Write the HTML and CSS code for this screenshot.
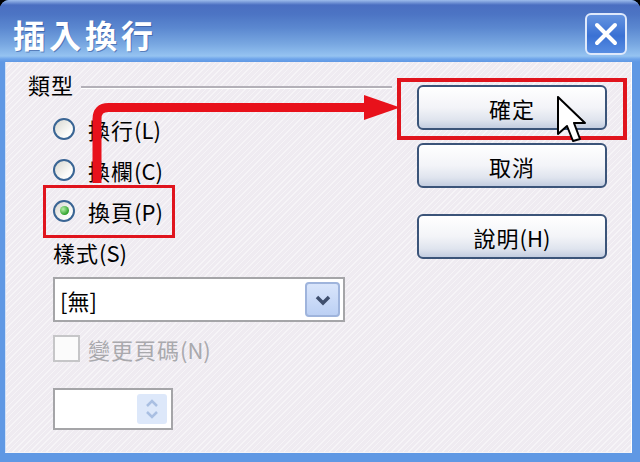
FILE: index.html
```html
<!DOCTYPE html>
<html lang="zh-Hant">
  <head>
    <meta charset="UTF-8" />
    <meta name="viewport" content="width=device-width, initial-scale=1.0" />
    <title>插入換行</title>
    <link rel="stylesheet" href="styles.css">
  </head>
  <body>
    <div class="window">
      <!-- Title bar -->
      <div class="titlebar">
        <h1 class="title">插入換行</h1>
        <button class="close" aria-label="關閉">
          <svg width="26" height="26" viewBox="0 0 26 26">
            <path d="M4 4 L22 22 M22 4 L4 22" stroke="#fff" stroke-width="4" stroke-linecap="round" />
          </svg>
        </button>
      </div>

      <!-- Dialog body -->
      <div class="content">
        <div class="left">
          <div class="legend">
            <span>類型</span>
            <span class="rule"></span>
          </div>
          <label class="radio-row"><span class="radio"></span>換行<span class="key">(L)</span></label>
          <label class="radio-row"><span class="radio"></span>換欄<span class="key">(C)</span></label>
          <label class="radio-row"><span class="radio checked"></span>換頁<span class="key">(P)</span></label>

          <div class="field-label">樣式<span class="key">(S)</span></div>
          <div class="combo">
            <span class="combo-text">[無]</span>
            <span class="combo-btn">
              <svg width="18" height="12" viewBox="0 0 18 12">
                <path d="M3 3 L9 9 L15 3" stroke="#3f4f6e" stroke-width="3.5" fill="none" />
              </svg>
            </span>
          </div>

          <div class="check-row">
            <span class="check"></span>
            <span>變更頁碼<span class="key">(N)</span></span>
          </div>

          <div class="spin">
            <span class="spin-btn">
              <svg width="16" height="24" viewBox="0 0 16 24">
                <path d="M3 9 L8 4 L13 9 M3 15 L8 20 L13 15" stroke="#a9bfe2" stroke-width="2.5" fill="none" />
              </svg>
            </span>
          </div>
        </div>

        <div class="right">
          <button class="btn">確定</button>
          <button class="btn">取消</button>
          <button class="btn btn-help">說明<span class="key">(H)</span></button>
        </div>
      </div>

      <!-- Annotations drawn over the dialog -->
      <svg class="arrow" width="640" height="462" viewBox="0 0 640 462">
        <path d="M97 183 V119 Q97 107.5 108.5 107.5 H368" stroke="#e8111b" stroke-width="9" fill="none" />
        <polygon points="364,95 400,107.5 364,120" fill="#e8111b" />
      </svg>
      <div class="mark mark-radio"></div>
      <div class="mark mark-ok"></div>
      <svg class="cursor" width="30" height="46" viewBox="0 0 30 46">
        <path d="M1 1 L1 38 L10 30 L16 45 L23 43 L17 27 L28 27 Z" fill="#fff" stroke="#000" stroke-width="2" stroke-linejoin="round" />
      </svg>
    </div>
  </body>
</html>
```

FILE: styles.css
```css
body {
  margin: 0;
  background: #000;
  font-family: "Noto Sans CJK TC", "Liberation Sans", sans-serif;
  color: #000;
}

.window {
  position: relative;
  width: 640px;
  height: 462px;
  box-sizing: border-box;
  padding: 0 8px 9px 5px;
  background: #5f98e4;
  border-radius: 9px 9px 0 0;
  overflow: hidden;
  display: flex;
  flex-direction: column;
}

/* Title bar */
.titlebar {
  height: 62px;
  margin: 0 -8px 0 -5px;
  padding: 6px 13px 0 13px;
  box-sizing: border-box;
  display: flex;
  align-items: center;
  justify-content: space-between;
  background: linear-gradient(
    to bottom,
    #9dbcec 0,
    #4a6fc1 5px,
    #4c74c4 14px,
    #5b88d0 28px,
    #78a7e1 44px,
    #95c3f1 56px,
    #6ea4ea 59px,
    #5f98e4 62px
  );
}

.title {
  margin: 0;
  font-size: 32px;
  font-weight: bold;
  letter-spacing: 4px;
  color: #fff;
  line-height: 40px;
  text-shadow: 1px 1px 0 rgba(40, 70, 140, 0.5);
}

.close {
  width: 42px;
  height: 42px;
  padding: 0;
  border: 2px solid #dfe9fb;
  border-radius: 6px;
  background: linear-gradient(to bottom, #6594e0, #3a71d4 55%, #578de2);
  display: flex;
  align-items: center;
  justify-content: center;
}

/* Body */
.content {
  flex: 1;
  display: flex;
  border-left: 1px solid #cfe0f8;
  border-right: 1px solid #fff;
  border-bottom: 1px solid #f4f4f8;
  background-color: #efebf1;
  background-image: repeating-linear-gradient(
    135deg,
    rgba(255, 255, 255, 0.45) 0 1px,
    transparent 1px 4px
  );
  font-size: 22px;
}

.left {
  width: 386px;
}

.legend {
  display: flex;
  align-items: center;
  gap: 7px;
  padding: 9px 0 0 22px;
  line-height: 26px;
  letter-spacing: 1px;
}

.rule {
  flex: 1;
  margin-top: 7px;
  border-top: 2px solid #b3b0b8;
  border-bottom: 1px solid #fff;
}

.radio-row {
  display: flex;
  align-items: center;
  height: 41px;
  padding-left: 47px;
  letter-spacing: 1px;
}

.radio-row:first-of-type {
  margin-top: 11px;
}

.radio {
  width: 22px;
  height: 22px;
  box-sizing: border-box;
  margin-right: 13px;
  border: 2px solid #3a6594;
  border-radius: 50%;
  background: linear-gradient(135deg, #d8d7d0, #fbfbf9 70%, #fff);
  display: flex;
  align-items: center;
  justify-content: center;
}

.radio.checked::after {
  content: "";
  width: 9px;
  height: 9px;
  border-radius: 50%;
  background: radial-gradient(circle at 35% 35%, #b6eea9, #2ea22a 70%);
}

.key {
  letter-spacing: 0;
}

.field-label {
  margin: 8px 0 0 47px;
  line-height: 26px;
  letter-spacing: 1px;
}

.combo {
  width: 292px;
  height: 45px;
  box-sizing: border-box;
  margin: 12px 0 0 47px;
  padding: 0 3px 0 5px;
  border: 2px solid #a5a5a8;
  background: #fff;
  display: flex;
  align-items: center;
  justify-content: space-between;
}

.combo-btn {
  width: 35px;
  height: 35px;
  box-sizing: border-box;
  border: 2px solid #9fb4dc;
  border-radius: 4px;
  background: linear-gradient(to bottom, #d9e5fb, #bcd0f4);
  display: flex;
  align-items: center;
  justify-content: center;
}

.check-row {
  display: flex;
  align-items: center;
  gap: 8px;
  height: 27px;
  margin: 13px 0 0 47px;
  color: #a9a9ad;
  letter-spacing: 1px;
}

.check {
  width: 27px;
  height: 27px;
  box-sizing: border-box;
  border: 2px solid #c6c6c8;
  background: #fbfbfb;
}

.spin {
  width: 120px;
  height: 42px;
  box-sizing: border-box;
  margin: 26px 0 0 47px;
  padding-right: 4px;
  border: 2px solid #a5a5a8;
  background: #fff;
  display: flex;
  align-items: center;
  justify-content: flex-end;
}

.spin-btn {
  width: 30px;
  height: 30px;
  border-radius: 3px;
  background: #dde8fa;
  display: flex;
  align-items: center;
  justify-content: center;
}

.right {
  margin-left: 25px;
  padding-top: 23px;
  display: flex;
  flex-direction: column;
  gap: 13px;
}

.btn {
  width: 190px;
  height: 45px;
  padding: 0;
  border: 2px solid #3b5479;
  border-radius: 6px;
  background: linear-gradient(to bottom, #ffffff, #f3f4f8 50%, #dfe4ee 80%, #c3cde0);
  font-family: inherit;
  font-size: 22px;
  letter-spacing: 1px;
  color: #000;
}

.btn-help {
  margin-top: 13px;
}

/* Overlays: red annotation marks and mouse pointer */
.arrow {
  position: absolute;
  left: 0;
  top: 0;
  pointer-events: none;
}

.mark {
  position: absolute;
  box-sizing: border-box;
  border: 3px solid #e0141d;
  pointer-events: none;
}

.mark-radio {
  left: 43px;
  top: 185px;
  width: 132px;
  height: 53px;
}

.mark-ok {
  left: 397px;
  top: 78px;
  width: 230px;
  height: 62px;
  border-width: 4px;
}

.cursor {
  position: absolute;
  left: 557px;
  top: 96px;
  pointer-events: none;
}
```
